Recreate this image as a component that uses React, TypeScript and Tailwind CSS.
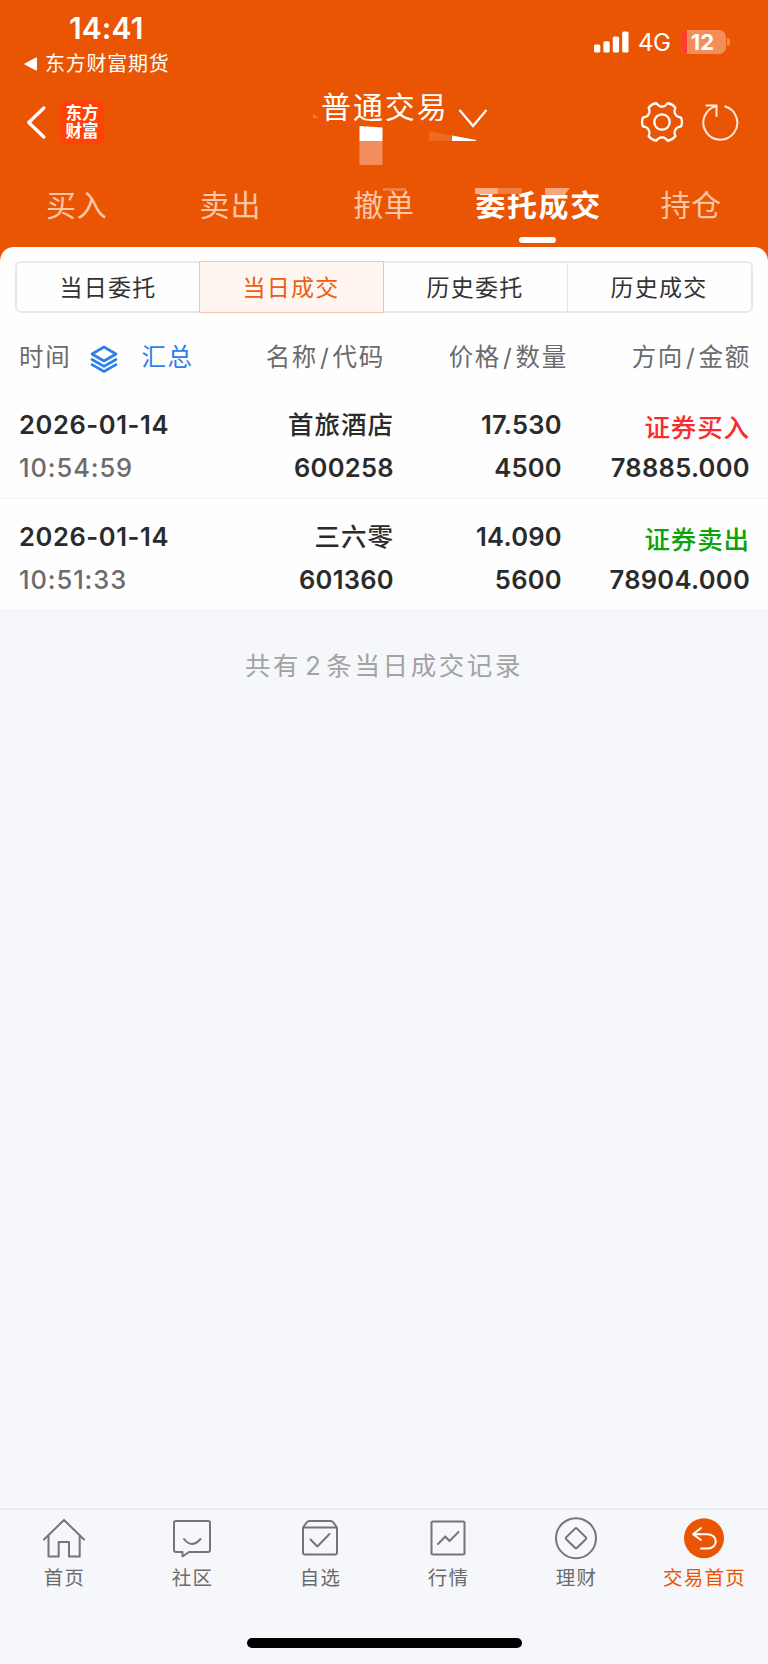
import React from "react";

const tabs = ["买入", "卖出", "撤单", "委托成交", "持仓"];
const segments = ["当日委托", "当日成交", "历史委托", "历史成交"];

const trades = [
  {
    date: "2026-01-14",
    time: "10:54:59",
    name: "首旅酒店",
    code: "600258",
    price: "17.530",
    amount: "4500",
    side: "证券买入",
    sideColor: "text-[#fb2a2d]",
    total: "78885.000",
  },
  {
    date: "2026-01-14",
    time: "10:51:33",
    name: "三六零",
    code: "601360",
    price: "14.090",
    amount: "5600",
    side: "证券卖出",
    sideColor: "text-[#0aa30a]",
    total: "78904.000",
  },
];

// Six-toothed gear outline around (22, 22)
const gearPath = () => {
  const p = (r: number, deg: number) => {
    const a = (deg * Math.PI) / 180;
    return `${(22 + r * Math.cos(a)).toFixed(2)} ${(22 + r * Math.sin(a)).toFixed(2)}`;
  };
  let d = `M${p(19.6, -13)}`;
  for (let a = 0; a < 360; a += 60) {
    d += ` Q${p(20.8, a)} ${p(19.6, a + 13)}`;
    d += ` C${p(16, a + 19)} ${p(15, a + 24)} ${p(15.6, a + 30)}`;
    d += ` C${p(15, a + 36)} ${p(16, a + 41)} ${p(19.6, a + 47)}`;
  }
  return d + "Z";
};

const StatusBar = () => (
  <div className="flex h-[80px] justify-between">
    <div className="w-[200px]">
      <div className="mt-[10px] ml-[69px] h-[36px] text-[30px] leading-[36px] font-semibold tracking-[0.1px]">14:41</div>
      <div className="mt-[5px] flex h-[26px] items-center pl-[24px]">
        <svg width="13" height="14" viewBox="0 0 13 14" fill="white">
          <path d="M1 6.2 11.5.7Q13 0 13 1.6V12.4Q13 14 11.5 13.3L1 7.8Q-.4 7 1 6.2Z" />
        </svg>
        <span className="ml-[8px] text-[20px] leading-[26px] tracking-[0.75px]">东方财富期货</span>
      </div>
    </div>
    <div className="mt-[28px] mr-[38px] flex h-[28px] items-center">
      <svg width="35" height="22" viewBox="0 0 35 22" fill="white">
        <rect x="0" y="13.5" width="6.3" height="8" rx="1.6" />
        <rect x="9.4" y="10.2" width="6.3" height="11.3" rx="1.6" />
        <rect x="18.8" y="5.5" width="6.3" height="16" rx="1.6" />
        <rect x="28.2" y="0.5" width="6.3" height="21" rx="1.6" />
      </svg>
      <span className="ml-[9px] w-[33px] pt-[2px] text-[24px] leading-[28px] tracking-[-0.5px]">4G</span>
      <div className="relative ml-[10px] flex h-[24px] w-[45px] items-center justify-center overflow-hidden rounded-[7px] bg-[#f28e5a]">
        <div className="absolute inset-y-0 left-0 w-[6px] bg-[#ff3b30]" />
        <span className="relative pr-[2px] text-[22px] leading-[24px] font-bold">12</span>
      </div>
      <div className="ml-[1px] h-[8px] w-[3px] rounded-r-full bg-[#f28e5a]" />
    </div>
  </div>
);

const TitleBar = () => (
  <div className="relative flex h-[90px] items-start">
    <svg className="mt-[26px] ml-[26px]" width="20" height="33" viewBox="0 0 20 33" fill="none" stroke="white" strokeWidth="3.3" strokeLinecap="round" strokeLinejoin="round">
      <path d="M17.8 2 2.8 16.5 17.8 31" />
    </svg>
    <div className="mt-[20px] ml-[14px] flex h-[44px] w-[44px] flex-col items-center justify-center rounded-[7px] bg-[#ff4208] text-[16.5px] leading-[18.5px] font-bold">
      <span>东方</span>
      <span>财富</span>
    </div>
    <div className="mt-[8px] ml-[217px] flex">
      <span className="text-[30px] leading-[38px] tracking-[1.9px]">普通交易</span>
      <svg className="mt-[20px] ml-[8px]" width="32" height="22" viewBox="0 0 32 22" fill="none" stroke="white" strokeWidth="2.3">
        <path d="M2.5 2 16 18 29.5 2" />
      </svg>
    </div>
    <svg className="mt-[20px] ml-auto" width="44" height="44" viewBox="0 0 44 44" fill="none" stroke="white" strokeWidth="2.3" strokeLinejoin="round">
      <path d={gearPath()} />
      <circle cx="22" cy="22" r="7.7" />
    </svg>
    <svg className="mt-[22px] mr-[27px] ml-[17px]" width="40" height="40" viewBox="0 0 40 40" fill="none" stroke="#ffe9dc" strokeWidth="2">
      <path d="M23.5 4.2A17 17 0 1 1 15.5 4.1M4.5 3.6H15.5V14.8" />
    </svg>

    {/* masked account fragments */}
    <svg className="absolute top-[34px] left-[312px]" width="170" height="54" viewBox="0 0 170 54">
      <path d="M1 0 7 4H1Z" fill="#f07c3c" />
      <path d="M47.5 12 70.5 13.5V27H47.5Z" fill="white" />
      <path d="M47.5 27H70.5V51H47.5Z" fill="#f38f5c" />
      <path d="M117 17 140 21.5V27H117Z" fill="#ed6a20" />
      <path d="M140 21.5 164 26V27H140Z" fill="white" />
    </svg>
  </div>
);

const Tabs = () => (
  <div className="relative grid h-[77px] grid-cols-5">
    {tabs.map((tab) => {
      const active = tab === "委托成交";
      return (
        <div key={tab} className="flex flex-col items-center">
          <span
            className={
              active
                ? "mt-[15px] ml-[2px] text-[30px] leading-[40px] font-bold tracking-[1.6px] whitespace-nowrap"
                : "mt-[15px] text-[30px] leading-[40px] tracking-[0.8px] whitespace-nowrap text-[#fbc6a8]"
            }
          >
            {tab}
          </span>
          {active && <span className="mt-[12px] h-[6px] w-[37px] rounded-full bg-white" />}
        </div>
      );
    })}
    <svg className="absolute top-[18px] left-[382px]" width="190" height="9" viewBox="0 0 190 9">
      <path d="M1 0H24V3H1Z" fill="#f07c40" />
      <path d="M93 0H116V6H93Z" fill="#f7ad86" />
      <path d="M116 0H140V6H116Z" fill="#f07c40" />
      <path d="M163 0H188L182 7H163Z" fill="#f6a57c" />
    </svg>
  </div>
);

const Segments = () => (
  <div className="mx-[15px] flex h-[52px] rounded-[6px] border-2 border-[#e6e8eb]">
    {segments.map((label, i) => (
      <div
        key={label}
        className={
          i === 1
            ? "-my-[2px] -ml-px flex flex-1 items-center justify-center border-[1.5px] border-[#f5c3a9] bg-[#fff5f1] text-[#ee5d12]"
            : i === 3
              ? "flex flex-1 items-center justify-center border-l border-[#e2e4e8] text-[#333333]"
              : "flex flex-1 items-center justify-center text-[#333333]"
        }
      >
        <span className="pt-[2px] pr-[1px] text-[23px] leading-[32px] tracking-[1.3px]">{label}</span>
      </div>
    ))}
  </div>
);

const HeaderPair = ({ left, right }: { left: string; right: string }) => (
  <span className="w-[183px] text-right">
    {left}
    <span className="mx-[2px]">/</span>
    {right}
  </span>
);

const ListHeader = () => (
  <div className="mt-[27px] flex h-[34px] items-center text-[24.5px] leading-[34px] tracking-[1.7px] text-[#6b6b6b]">
    <div className="flex w-[202px] shrink-0 items-center pl-[19px]">
      <span>时间</span>
      <svg className="mt-[4px] ml-[19px]" width="28" height="28" viewBox="0 0 28 28" fill="none" stroke="#2f80e4" strokeWidth="2.7" strokeLinejoin="round" strokeLinecap="round">
        <path d="M14 2 26 9 14 16 2 9Z" />
        <path d="M2 14.5 14 21.3 26 14.5" />
        <path d="M2 19.7 14 26.5 26 19.7" />
      </svg>
      <span className="ml-[23px] text-[#2f80e4]">汇总</span>
    </div>
    <HeaderPair left="名称" right="代码" />
    <HeaderPair left="价格" right="数量" />
    <HeaderPair left="方向" right="金额" />
  </div>
);

const TradeRow = ({ trade }: { trade: (typeof trades)[number] }) => (
  <div className="flex h-[111px] pt-[16px] text-[25.5px] leading-[43px] font-semibold tracking-[0.3px] text-[#2b2b2b]">
    <div className="ml-[19px] flex w-[182px] flex-col tracking-[0.6px]">
      <span>{trade.date}</span>
      <span className="font-medium tracking-[0.9px] text-[#6b6b6b]">{trade.time}</span>
    </div>
    <div className="flex w-[193px] flex-col text-right">
      <span className="font-medium tracking-[1px]">{trade.name}</span>
      <span>{trade.code}</span>
    </div>
    <div className="flex w-[168px] flex-col text-right">
      <span>{trade.price}</span>
      <span>{trade.amount}</span>
    </div>
    <div className="flex w-[188px] flex-col text-right">
      <span className={trade.sideColor}>
        <span className="relative top-[3px] font-medium tracking-[0.9px]">{trade.side}</span>
      </span>
      <span>{trade.total}</span>
    </div>
  </div>
);

const navItems = [
  {
    label: "首页",
    icon: <path d="M2 22.5 22 3 42 22.5M6.5 19V39.5H16.7V25H27V39.5H37.7V19" />,
  },
  {
    label: "社区",
    icon: (
      <>
        <path d="M6 4H38Q40 4 40 6V33Q40 35 38 35H19L12.5 39.5V35H6Q4 35 4 33V6Q4 4 6 4Z" />
        <path d="M14 22Q22 32 30.5 22" />
      </>
    ),
  },
  {
    label: "自选",
    icon: (
      <>
        <path d="M5 12V35.5Q5 37.5 7 37.5H37Q39 37.5 39 35.5V12Q39 10.5 38 9L35 5.2Q34 4 32.5 4H11.5Q10 4 9 5.2L6 9Q5 10.5 5 12ZM5 10.5H39" />
        <path d="M12.5 22.5 19.3 29.5 31.5 17" />
      </>
    ),
  },
  {
    label: "行情",
    icon: (
      <>
        <rect x="5.5" y="4.5" width="33" height="33" rx="1.5" />
        <path d="M12 27 19.3 19.5 23.5 24 32.5 15" />
      </>
    ),
  },
  {
    label: "理财",
    icon: (
      <>
        <circle cx="22" cy="21.2" r="20" />
        <path d="M21 11.6Q22 10.6 23 11.6L31.8 20.2Q32.8 21.2 31.8 22.2L23 30.8Q22 31.8 21 30.8L12.2 22.2Q11.2 21.2 12.2 20.2Z" />
      </>
    ),
  },
  {
    label: "交易首页",
    icon: (
      <>
        <circle cx="22" cy="21.2" r="20" fill="#ea5504" stroke="none" />
        <path d="M19 11 11 17.2 19 23M11.5 17.2H25.5C36.5 17.2 36.5 31.5 25.5 31.5H19" stroke="white" />
      </>
    ),
  },
];

const BottomNav = () => (
  <div className="h-[156px] border-t-2 border-[#e9ebee] bg-[#f6f7fa]">
    <div className="grid grid-cols-6">
      {navItems.map((item) => (
        <div key={item.label} className="flex flex-col items-center pt-[7px]">
          <svg width="44" height="44" viewBox="0 0 44 44" fill="none" stroke="#757575" strokeWidth="2" strokeLinejoin="round" strokeLinecap="round">
            {item.icon}
          </svg>
          <span
            className={
              item.label === "交易首页"
                ? "mt-[3px] ml-[1px] text-[19.5px] leading-[28px] tracking-[1.2px] text-[#ea5504]"
                : "mt-[3px] ml-[1px] text-[19.5px] leading-[28px] tracking-[1.2px] text-[#6b6b6b]"
            }
          >
            {item.label}
          </span>
        </div>
      ))}
    </div>
    <div className="mx-auto mt-[46px] h-[10px] w-[275px] rounded-full bg-black" />
  </div>
);

const App: React.FC = () => {
  return (
    <div className="flex h-[1664px] w-[768px] flex-col overflow-hidden bg-[#f5f7fa] font-['Inter','Noto_Sans_CJK_SC',sans-serif]">
      {/* Header */}
      <div className="bg-[#ea5504] text-white">
        <StatusBar />
        <TitleBar />
        <Tabs />
        <div className="h-[14px] rounded-t-[14px] bg-[#fefefe]" />
      </div>

      {/* Records */}
      <div className="bg-[#fefefe]">
        <Segments />
        <ListHeader />
        <div className="mt-[13px] h-[222px]">
          <TradeRow trade={trades[0]} />
          <div className="h-px bg-[#f0f1f3]" />
          <TradeRow trade={trades[1]} />
        </div>
      </div>

      <div className="mt-[37px] flex-1 text-center text-[25.5px] leading-[40px] tracking-[2.6px] text-[#a2a2a2]">
        共有<span className="mr-[3px] ml-[4px]">2</span>条当日成交记录
      </div>

      <BottomNav />
    </div>
  );
};

export default App;
